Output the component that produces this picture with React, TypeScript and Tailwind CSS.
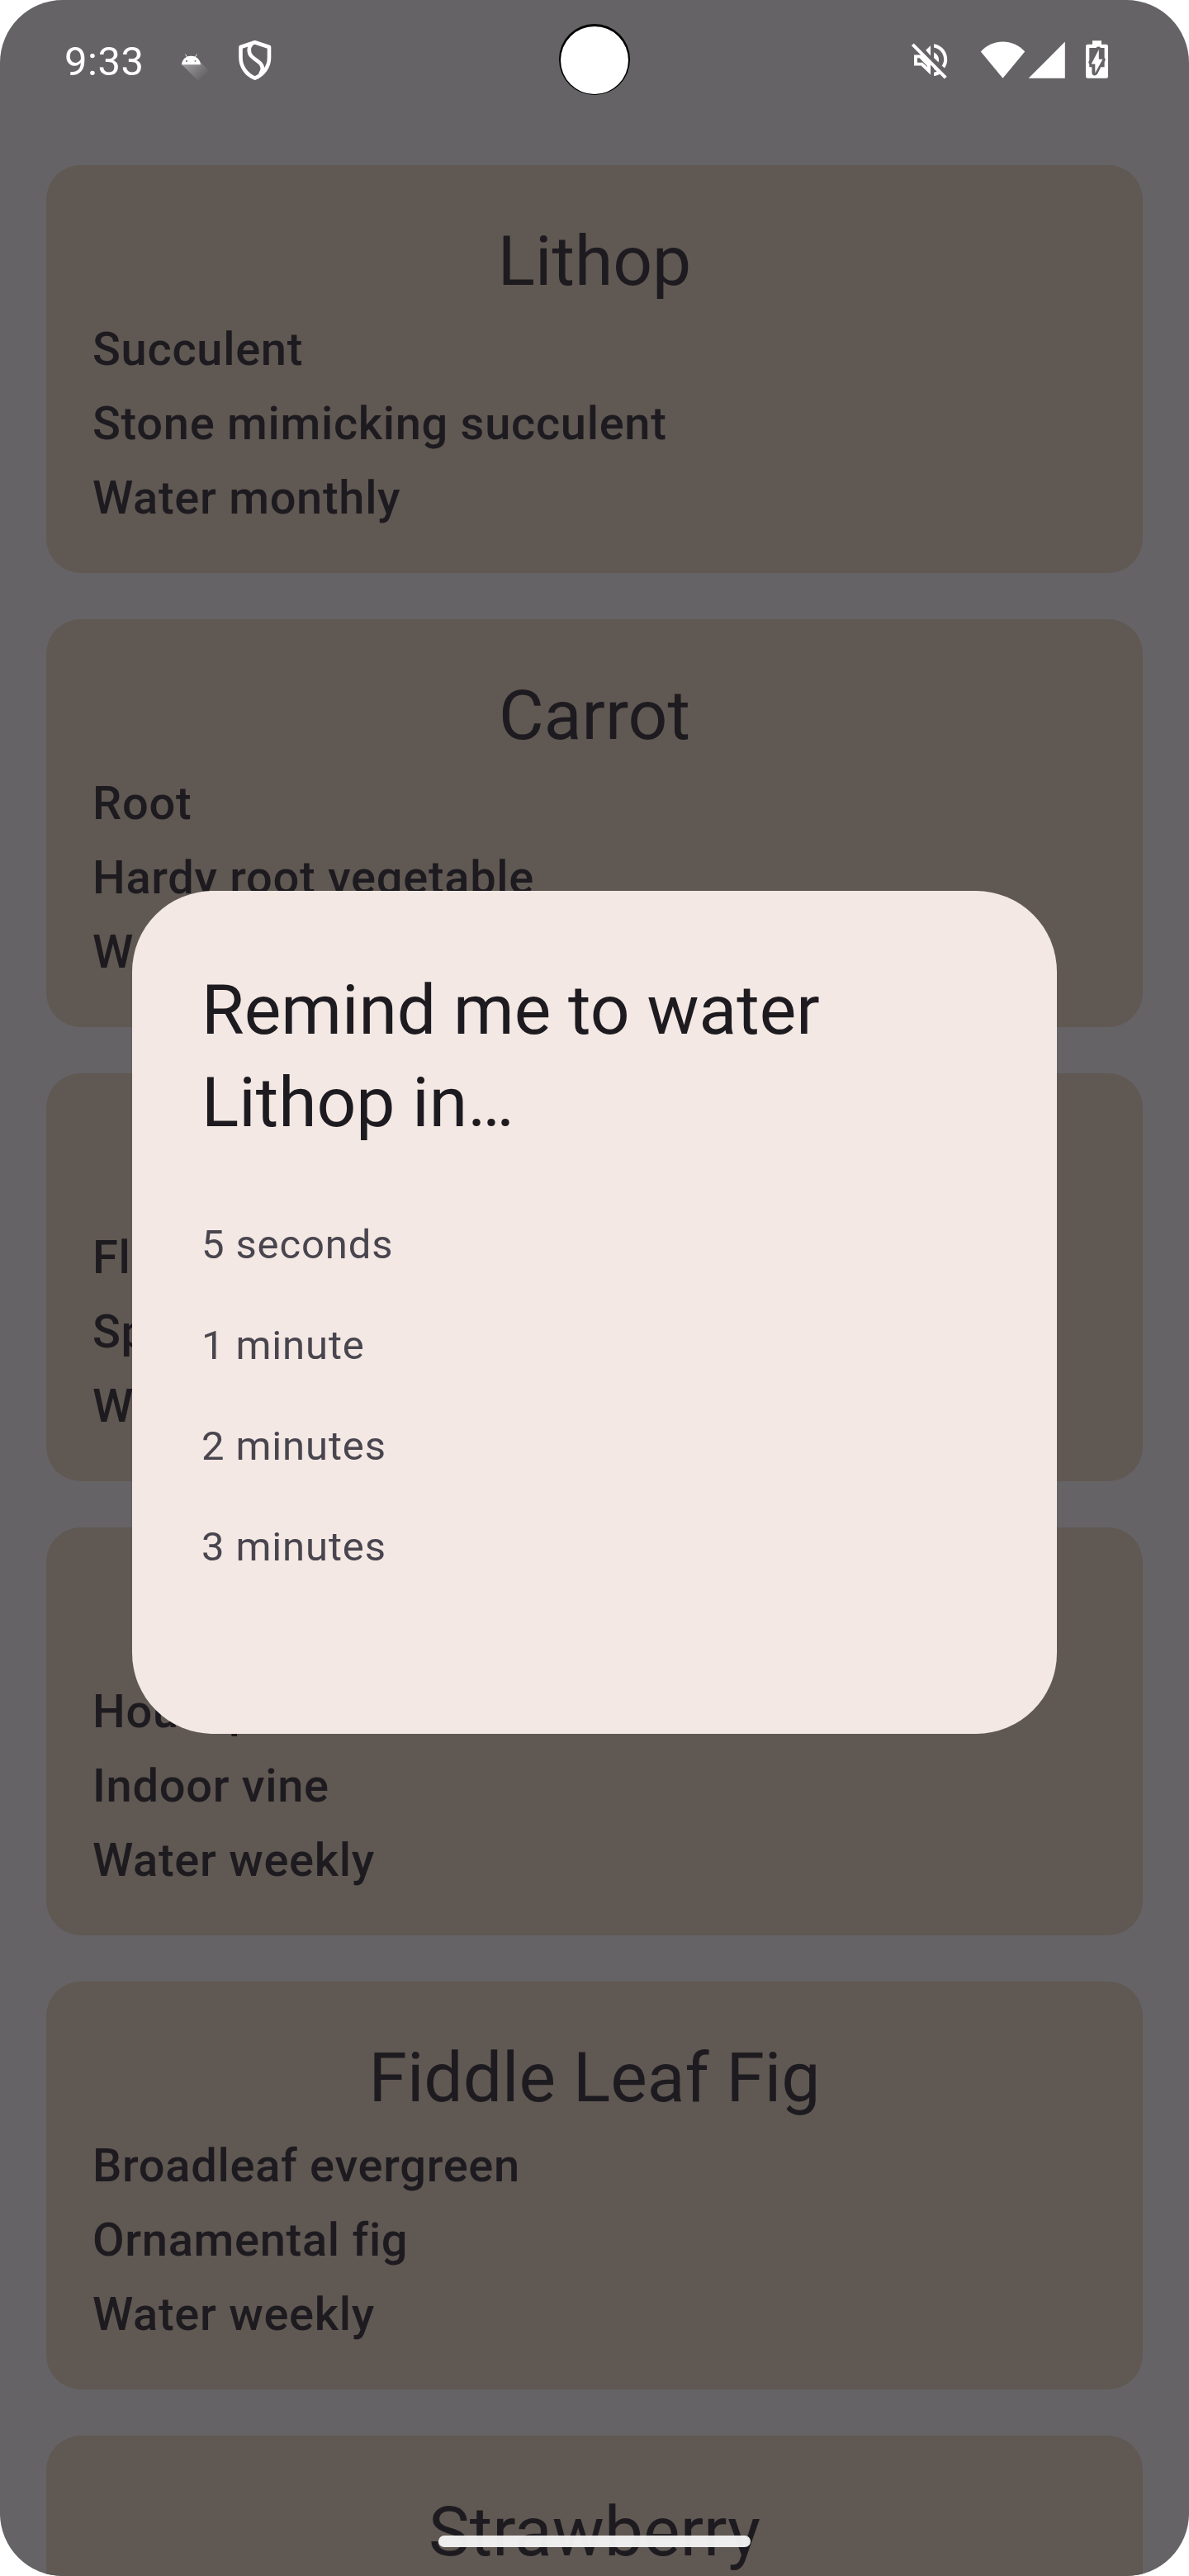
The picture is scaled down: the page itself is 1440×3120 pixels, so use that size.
type Plant = { name: string; lines: string[] };

const plants: Plant[] = [
  { name: 'Lithop', lines: ['Succulent', 'Stone mimicking succulent', 'Water monthly'] },
  { name: 'Carrot', lines: ['Root', 'Hardy root vegetable', 'Water daily'] },
  { name: 'Peony', lines: ['Flower', 'Spring blooming flower', 'Water weekly'] },
  { name: 'Pothos', lines: ['Houseplant', 'Indoor vine', 'Water weekly'] },
  { name: 'Fiddle Leaf Fig', lines: ['Broadleaf evergreen', 'Ornamental fig', 'Water weekly'] },
  { name: 'Strawberry', lines: [] },
];

const delays = ['5 seconds', '1 minute', '2 minutes', '3 minutes'];

function AndroidIcon() {
  return (
    <svg className="mt-[64px] ml-[48px] h-[36px] w-[36px] shrink-0" viewBox="219 64 36 36">
      <defs>
        <linearGradient id="longShadow" x1="224" y1="74" x2="246" y2="96" gradientUnits="userSpaceOnUse">
          <stop offset="0" stopColor="#fff" stopOpacity="0.38" />
          <stop offset="1" stopColor="#fff" stopOpacity="0" />
        </linearGradient>
      </defs>
      <path d="M220 78 L239.5 97.500 L253 86 L240.500 72.500 Z" fill="url(#longShadow)" />
      <path
        fillRule="evenodd"
        fill="#fff"
        d="M220 78.200 C220.300 74 222.500 70.600 226 68.900 L224.200 65.800 L224.800 65.400 L226.700 68.600 C229.700 67.400 233.200 67.400 236.200 68.600 L238.100 65.400 L238.700 65.800 L236.900 68.900 C240.400 70.600 242.700 74 243 78.200 Z M226 73 a1 1 0 1 0 0 2 a1 1 0 1 0 0 -2 Z M236.500 73 a1 1 0 1 0 0 2 a1 1 0 1 0 0 -2 Z"
      />
    </svg>
  );
}

function ShieldIcon() {
  return (
    <svg
      className="mt-[48px] ml-[33px] h-[50px] w-[42px] shrink-0"
      viewBox="288 48 42 50"
      fill="none"
      stroke="#fff"
      strokeWidth="4.6"
      strokeLinecap="round"
      strokeLinejoin="round"
    >
      <path d="M308.700 51.300 L291.500 57 V70 C291.500 81 298.500 90.500 308.700 94.700 C318.900 90.500 326 81 326 70 V57 Z" />
      <path d="M304.500 53.500 C300.800 57.500 300.800 64 304.500 68 C307.500 71.200 312.500 73.600 315.300 76.800 C318.600 80.500 318.300 85 315.600 89" />
    </svg>
  );
}

function MutedIcon() {
  return (
    <svg className="mt-[51px] h-[46px] w-[46px] shrink-0" viewBox="1103 51 46 46">
      <path
        fillRule="evenodd"
        fill="#fff"
        d="M1107 66.500 H1116 L1127 77.500 V90.500 L1115.500 79.500 H1107 Z M1111 70.300 V75.700 H1117.200 L1123 81 V80 L1113.500 70.300 Z"
      />
      <path fill="#fff" d="M1127 55.200 V67.500 L1121.200 60.800 Z" />
      <path fill="#fff" d="M1131 53.300 C1140.500 54.800 1147.200 62.500 1147.200 72 C1147.200 76 1146 79.600 1143.900 82.600 L1140.700 79.600 C1142.200 77.500 1143.200 74.900 1143.200 72 C1143.200 64.600 1138 58.800 1131 57.400 Z" />
      <path fill="#fff" d="M1131 63.600 C1134.600 65.200 1137 68.400 1137 72.200 L1136.600 75.400 L1131 70 Z" />
      <path fill="#fff" d="M1131 81.300 L1139.200 89.200 C1136.800 90.600 1134 91.600 1131 92 V87.800 C1132.400 87.500 1133.500 87.100 1134.700 86.500 L1131 83.500 Z" />
      <path stroke="#fff" strokeWidth="4" d="M1105.300 53.800 L1145.300 94.200" />
    </svg>
  );
}

function WifiIcon() {
  return (
    <svg className="mt-[50px] ml-[38px] h-[46px] w-[56px] shrink-0" viewBox="1187 50 56 46">
      <path fill="#fff" d="M1214.500 94.700 L1187.800 62.400 C1202 46.500 1227 46.500 1241.200 62.400 Z" />
    </svg>
  );
}

function SignalIcon() {
  return (
    <svg className="mt-[50px] ml-[2px] h-[46px] w-[46px] shrink-0" viewBox="1245 50 46 46">
      <path fill="#fff" d="M1289.800 50.600 V94.700 H1245.700 Z" />
    </svg>
  );
}

function BatteryIcon() {
  return (
    <svg className="mt-[48px] ml-[23px] h-[48px] w-[30px] shrink-0" viewBox="1314 48 30 48">
      <path fill="#fff" d="M1323 49.200 H1334 V53.700 H1339.500 Q1342 53.700 1342 56.200 V92.200 Q1342 94.700 1339.500 94.700 H1317.500 Q1315 94.700 1315 92.200 V56.200 Q1315 53.700 1317.500 53.700 H1323 Z" />
      <path fill="#656366" d="M1319.300 58 H1327.500 C1328.500 56.300 1331.500 55.800 1333 58 H1337.600 V70 L1338.800 71.800 L1337.600 75.500 V81.200 H1333.200 L1329.500 88.800 C1327.500 92.600 1323 92.200 1322.400 88.500 V81.200 H1319.300 V78 L1318.200 75.500 L1319.300 73 Z" />
      <path fill="#fff" d="M1330.800 60 V71.700 H1335.500 L1326.300 88.600 V77.500 H1321.700 Z" />
    </svg>
  );
}

function StatusBar() {
  return (
    <header className="relative flex h-[200px] shrink-0 items-start justify-between pr-[96px] pl-[78px]">
      <div className="flex items-start">
        <span className="mt-[46px] w-[93px] text-[49px] leading-[58px] tracking-[0.5px] whitespace-nowrap text-white">
          9:33
        </span>
        <AndroidIcon />
        <ShieldIcon />
      </div>
      <div className="flex items-start">
        <MutedIcon />
        <WifiIcon />
        <SignalIcon />
        <BatteryIcon />
      </div>
      <div className="absolute top-[29px] left-[677px] h-[86px] w-[86px] rounded-full bg-black px-[2px] pt-[3px] pb-px">
        <div className="h-full w-full rounded-full bg-white" />
      </div>
    </header>
  );
}

function PlantCard({ plant }: { plant: Plant }) {
  return (
    <article className="h-[494px] shrink-0 rounded-[42px] bg-[#605852] px-[56px] pt-[61px] text-[#1d1b20]">
      <h2 className="text-center text-[84px] leading-[112px] font-normal">{plant.name}</h2>
      <div className="mt-[5px] text-[56px] leading-[90px] font-medium tracking-[0.7px]">
        {plant.lines.map((line) => (
          <p key={line}>{line}</p>
        ))}
      </div>
    </article>
  );
}

function ReminderDialog() {
  return (
    <section
      role="dialog"
      className="absolute top-[1079px] left-[160px] h-[1021px] w-[1120px] rounded-[98px] bg-[#f3e8e3] px-[84px] pt-[89px]"
    >
      <h1 className="text-[84px] leading-[112px] font-normal text-[#1d1b20]">
        Remind me to water
        <br />
        Lithop in…
      </h1>
      <ul className="mt-[55px] text-[49px] leading-[122px] tracking-[0.875px] text-[#49454f]">
        {delays.map((delay) => (
          <li key={delay}>{delay}</li>
        ))}
      </ul>
    </section>
  );
}

export default function App() {
  return (
    <div className="h-[3120px] w-[1440px] overflow-hidden bg-white font-['Roboto',sans-serif]">
      <div className="relative flex h-full flex-col overflow-hidden rounded-[76px] bg-[#656366]">
        <StatusBar />
        <main className="flex flex-col gap-[56px] px-[56px]">
          {plants.map((plant) => (
            <PlantCard key={plant.name} plant={plant} />
          ))}
        </main>
        <ReminderDialog />
        <div className="absolute top-[3071px] left-[531px] h-[14px] w-[378px] rounded-full bg-[#f7f7f7]/95" />
      </div>
    </div>
  );
}
